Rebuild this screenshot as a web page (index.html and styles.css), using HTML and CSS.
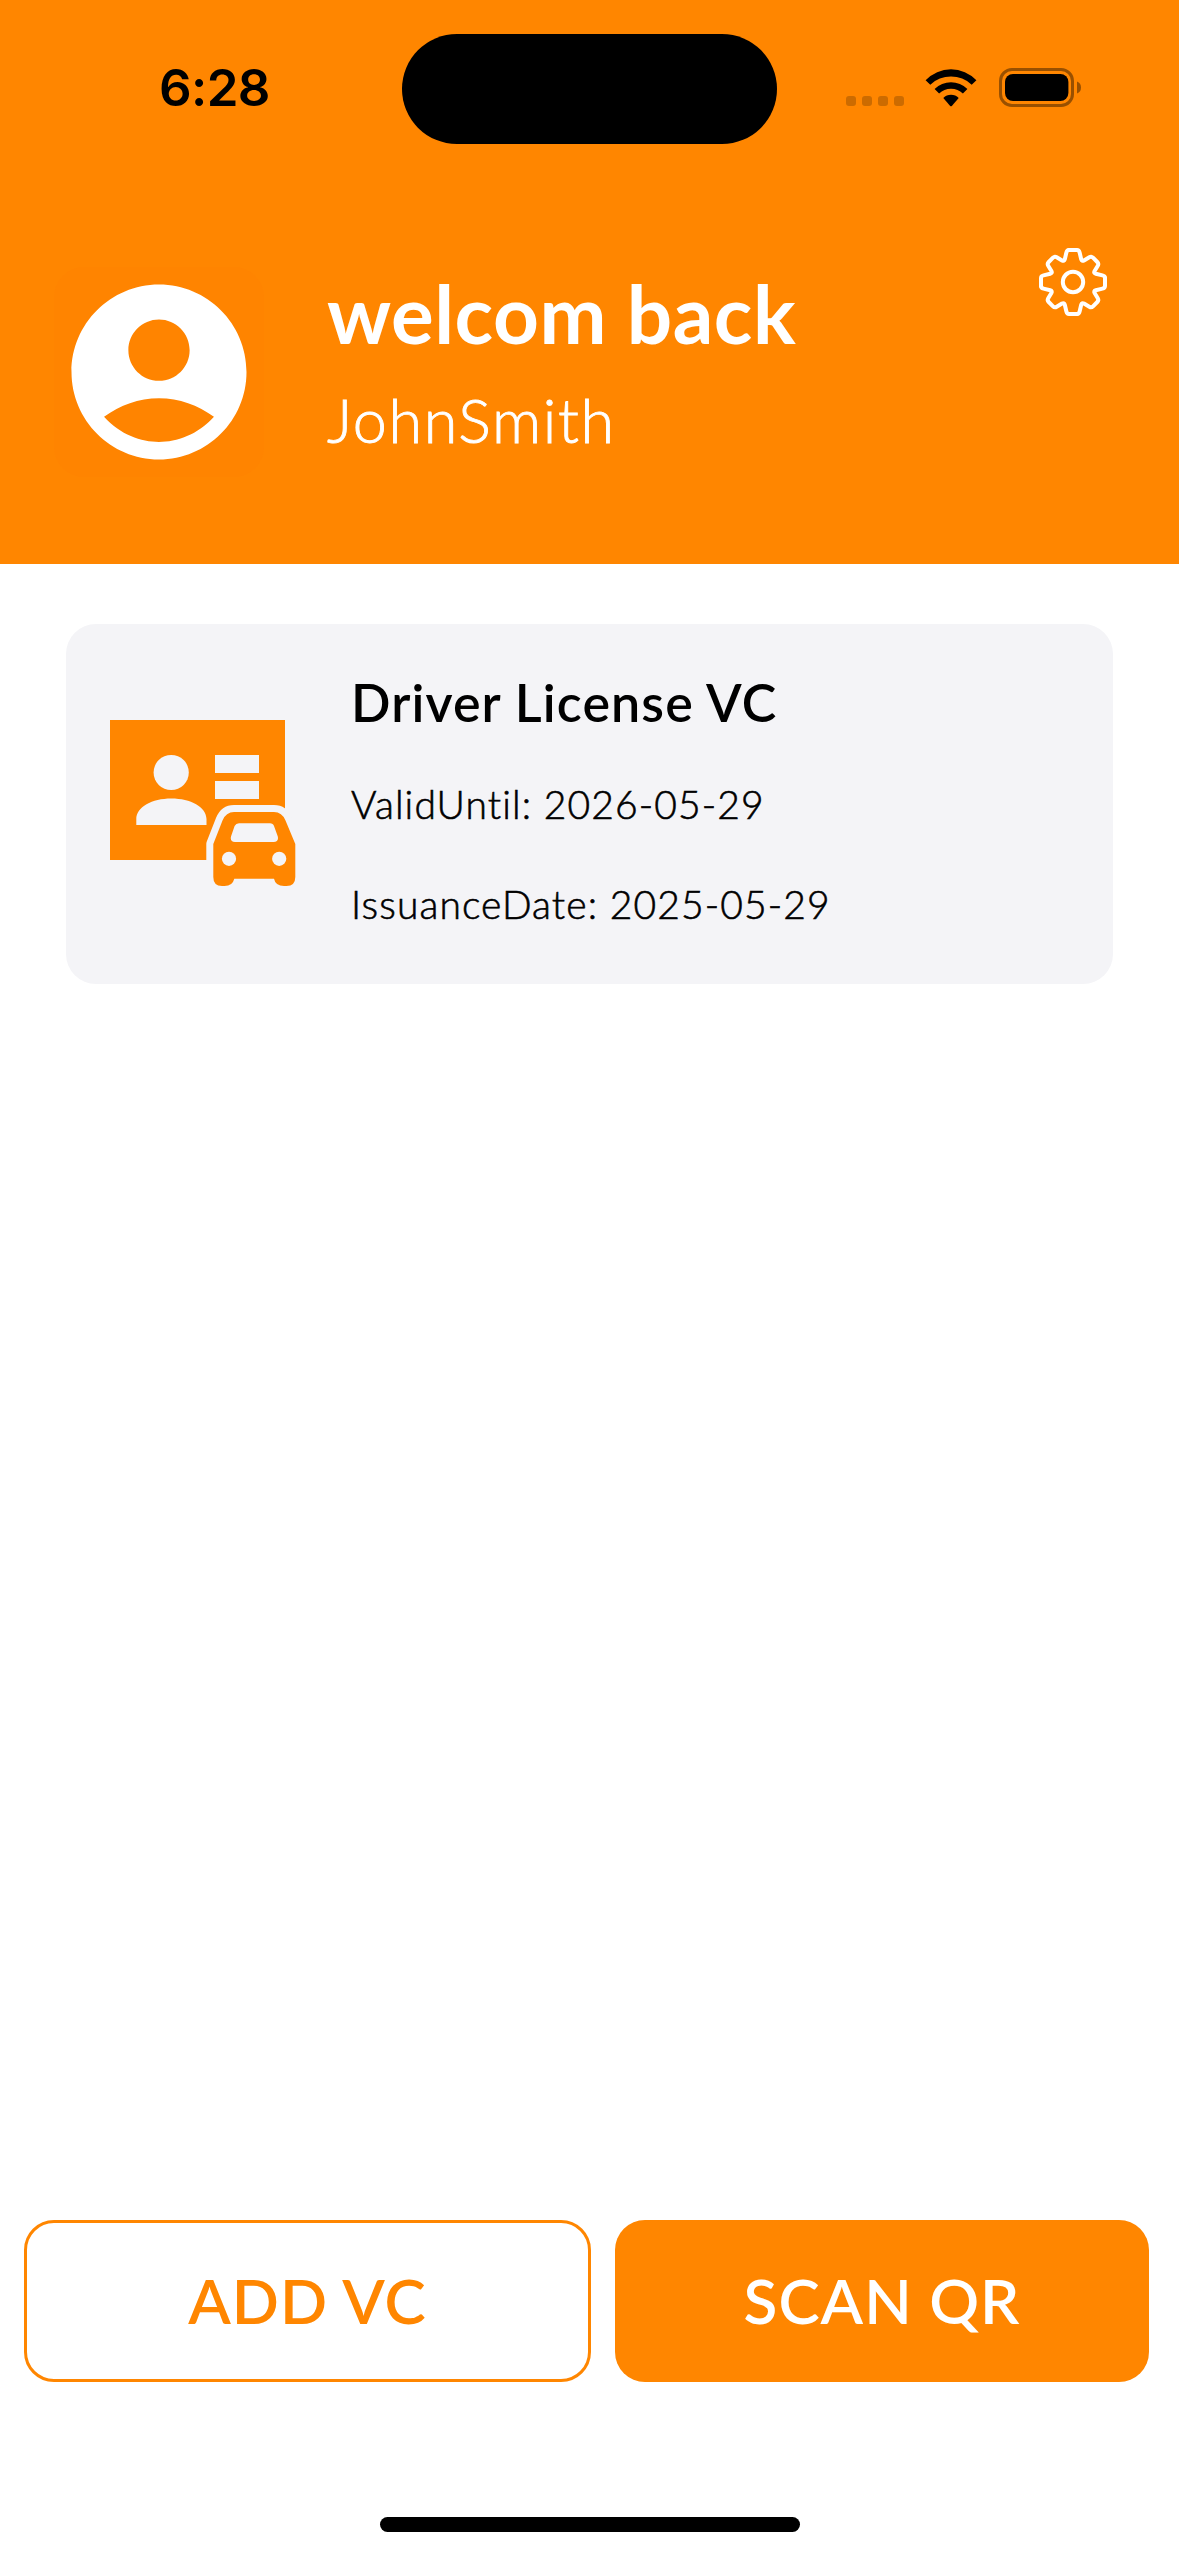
FILE: index.html
```html
<!DOCTYPE html>
<html lang="en">
<head>
<meta charset="utf-8">
<title>Wallet</title>
<link rel="stylesheet" href="styles.css">
</head>
<body>
<div class="screen">
  <header class="header">
    <div class="status">
      <time class="clock">6:28</time>
      <div class="island"></div>
      <div class="indicators">
        <div class="cell"><i></i><i></i><i></i><i></i></div>
        <svg class="wifi" viewBox="-26 0 52 38">
          <path d="M-25.4 11.2A35 35 0 0 1 25.4 11.2L20.7 15.7A30 30 0 0 0-20.7 15.7Z"/>
          <path d="M-16.4 20A23.5 23.5 0 0 1 16.4 20L11.9 24.5A17 17 0 0 0-11.9 24.5Z"/>
          <path d="M-7.7 29A11 11 0 0 1 7.7 29L.8 36.9Q0 37.7-.8 36.9Z"/>
        </svg>
        <svg class="battery" viewBox="0 0 82 39">
          <rect class="shell" x="1.5" y="1.5" width="72" height="36" rx="11.5"/>
          <rect x="6" y="6" width="63.4" height="27" rx="8"/>
          <path class="nub" d="M78 13.5Q82 15 82 19.5T78 25.5Z"/>
        </svg>
      </div>
    </div>
    <div class="profile">
      <svg class="avatar" viewBox="0 0 24 24"><path d="M12 2C6.48 2 2 6.48 2 12s4.48 10 10 10 10-4.48 10-10S17.52 2 12 2zm0 4c1.93 0 3.5 1.57 3.5 3.5S13.93 13 12 13s-3.5-1.57-3.5-3.5S10.07 6 12 6zm0 14c-2.03 0-4.43-.82-6.28-2.88C7.55 15.8 9.68 15 12 15s4.45.8 6.28 2.12C16.43 19.18 14.03 20 12 20z"/></svg>
      <div class="greeting">
        <h1>welcom back</h1>
        <p>JohnSmith</p>
      </div>
      <svg class="gear" viewBox="-34 -34 68 68">
        <defs><path id="teeth" d="M-4-32H4Q6-32 6.6-29.5L8.2-22.8Q8.8-20.4 11-21.6L16.3-24.8Q18.3-26 20-24.3L24.3-20Q26-18.3 24.8-16.3L21.6-11Q20.4-8.8 22.8-8.2L29.5-6.6Q32-6 32-4"/></defs>
        <use href="#teeth"/><use href="#teeth" transform="rotate(90)"/><use href="#teeth" transform="rotate(180)"/><use href="#teeth" transform="rotate(270)"/>
        <circle r="10.2"/>
      </svg>
    </div>
  </header>
  <main class="content">
    <article class="card">
      <svg class="license" viewBox="110 720 186 167">
        <path class="ink" d="M110 720H285V860H110Z"/>
        <circle class="paper" cx="171.2" cy="772.5" r="17.6"/>
        <path class="paper" d="M215 755h44v18h-44zM215 781h44v18h-44zM136.3 825V819C136.3 807 152 798.4 171.3 798.4S206.5 807 206.5 819V825Z"/>
        <path class="halo" d="M213.3 844L222.5 820.5Q226 812 234 812H274Q282 812 285.5 820.5L295.3 844V880H213.3Z"/>
        <path class="ink" d="M213.3 844L222.5 820.5Q226 812 234 812H274Q282 812 285.5 820.5L295.3 844V877Q295.3 886 286.5 886H284Q275.5 886 274 878.7H234.3Q232.5 886 224.5 886H222Q213.3 886 213.3 877Z"/>
        <path class="paper" d="M239 823.2H270Q273 823.2 274 826L277.8 836.5Q279 842 273.5 842H235Q229.8 842 231 836.5L234.6 826Q236 823.2 239 823.2Z"/>
        <circle class="paper" cx="229" cy="858.8" r="7.1"/><circle class="paper" cx="279.2" cy="858.8" r="7.1"/>
      </svg>
      <div class="details">
        <h2>Driver License VC</h2>
        <p class="valid">ValidUntil: 2026-05-29</p>
        <p class="issued">IssuanceDate: 2025-05-29</p>
      </div>
    </article>
  </main>
  <footer class="footer">
    <div class="actions">
      <button class="btn outline">ADD VC</button>
      <button class="btn solid">SCAN QR</button>
    </div>
    <div class="home"></div>
  </footer>
</div>
</body>
</html>
```
FILE: styles.css
```css
* { box-sizing: border-box; }
body, h1, h2, p { margin: 0; }
body { background: #fff; font-family: Lato, "Liberation Sans", sans-serif; color: #000; }
svg { display: block; flex: none; }
.screen { width: 1179px; height: 2556px; display: flex; flex-direction: column; }

.header { height: 564px; background: #ff8600; color: #fff; }
.status { height: 177px; padding-top: 34px; display: grid; grid-template-columns: 402px 375px 1fr; align-items: start; color: #000; }
.clock { padding: 23px 0 0 159px; font: 600 51px/62px Inter, sans-serif; letter-spacing: -.6px; }
.island { height: 110px; border-radius: 55px; background: #000; }
.indicators { display: flex; padding: 34px 0 0 69px; }
.cell { display: flex; gap: 6px; padding-top: 28px; }
.cell i { width: 10px; height: 10px; border-radius: 3px; background: #cc6b00; }
.wifi { width: 52px; height: 38px; margin: 1px 0 0 21px; }
.battery { width: 82px; height: 39px; margin-left: 22px; }
.shell { fill: none; stroke: #995000; stroke-width: 3; }
.nub { fill: #995000; }

.profile { display: flex; align-items: flex-start; padding: 71px 72px 0 54px; }
.avatar { width: 210px; height: 210px; margin-top: 19px; border-radius: 30px; background: #ff8400; fill: #fff; }
.greeting { flex: 1; padding: 17px 0 0 63px; white-space: nowrap; }
.greeting h1 { font-size: 80px; line-height: 96px; font-weight: 700; letter-spacing: .5px; }
.greeting p { margin-top: 23px; font-size: 61px; line-height: 72px; font-weight: 300; letter-spacing: 1.7px; -webkit-text-stroke: .9px #fff; }
.gear { width: 68px; height: 68px; fill: none; stroke: #fff; stroke-width: 4; stroke-linecap: round; }

.content { flex: 1; padding: 60px 66px 0; }
.card { height: 360px; border-radius: 30px; background: #f4f4f7; display: flex; align-items: flex-start; }
.license { width: 186px; height: 167px; margin: 96px 0 0 44px; }
.ink { fill: #ff8600; }
.paper { fill: #f4f4f7; }
.halo { fill: #f4f4f7; stroke: #f4f4f7; stroke-width: 14; stroke-linejoin: round; }
.details { padding: 47px 0 0 55px; white-space: nowrap; }
.details h2 { font-size: 52px; line-height: 62px; font-weight: 600; letter-spacing: 1.1px; }
.details p { font-size: 39px; line-height: 48px; font-weight: 300; letter-spacing: 1.1px; -webkit-text-stroke: .6px #000; }
.valid { margin-top: 47px; }
.issued { margin-top: 52px; }

.footer { height: 336px; }
.actions { display: flex; gap: 24px; padding: 0 30px 0 24px; }
.btn { height: 162px; border: 0; border-radius: 30px; padding: 0 0 3px; font: 600 62px/74px Lato, sans-serif; letter-spacing: 1px; }
.outline { width: 567px; border: 3px solid #ff8600; background: #fff; color: #ff8600; }
.solid { width: 534px; background: #ff8600; color: #fff; }
.home { width: 420px; height: 15px; margin: 135px 0 0 380px; border-radius: 8px; background: #000; }
```
